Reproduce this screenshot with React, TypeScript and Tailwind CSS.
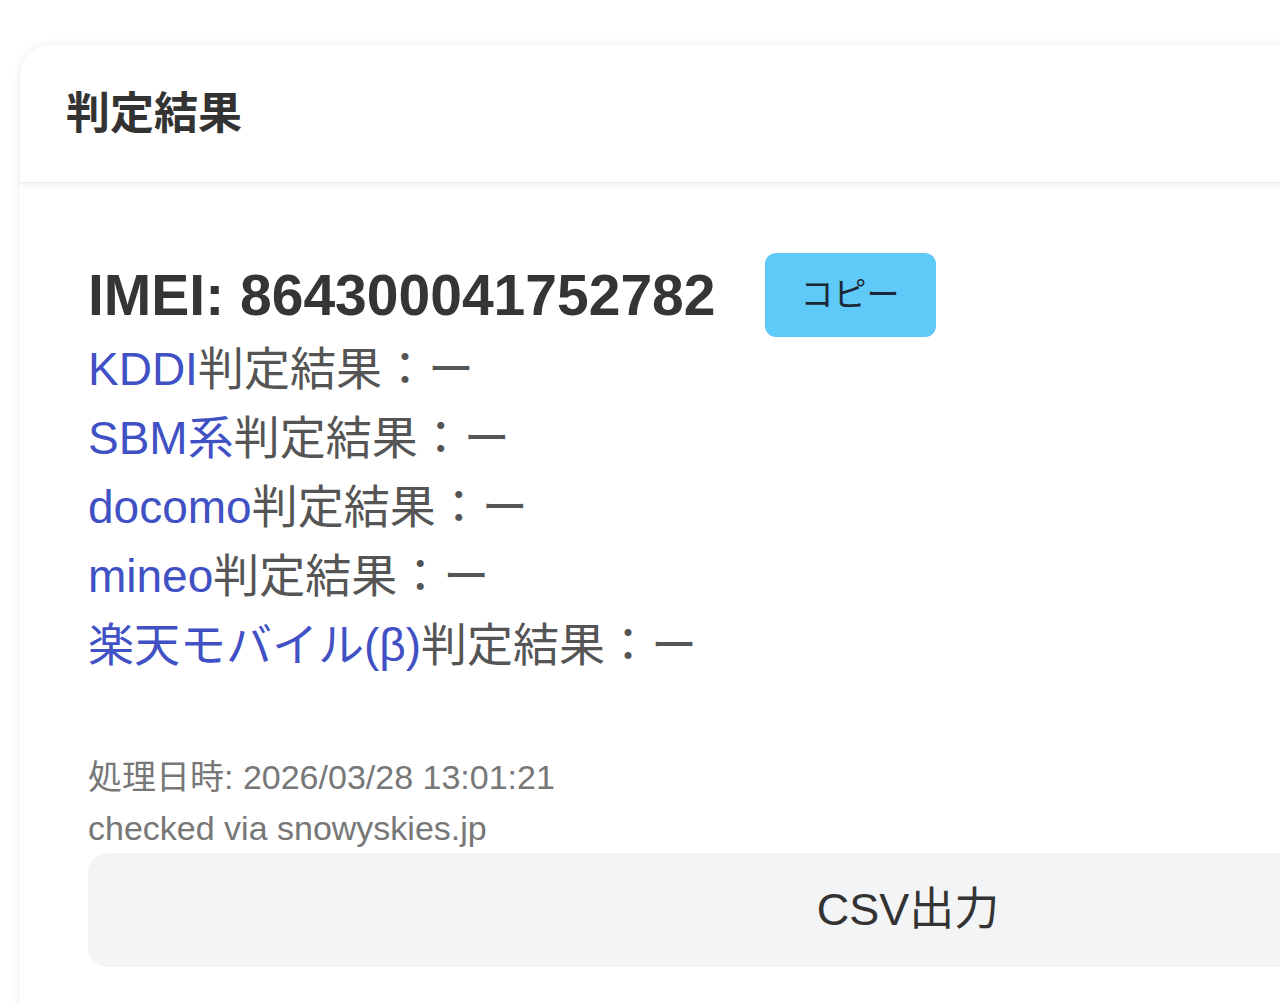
import React from "react";

const font = { fontFamily: '"Liberation Sans", "Noto Sans CJK JP", sans-serif' };

const carriers = ["KDDI", "SBM系", "docomo", "mineo", "楽天モバイル(β)"];

export default function App() {
  return (
    <div className="w-[1280px] h-[1005px] overflow-hidden bg-white" style={font}>
      <div className="ml-[20px] mt-[45px] w-[1760px] h-[1100px] rounded-[30px] bg-white shadow-[0_0_10px_rgba(0,0,0,0.07)]">
        <div className="relative z-10 h-[138px] flex items-center pl-[46px] rounded-t-[30px] bg-white border-b border-[#ececec] shadow-[0_3px_6px_rgba(0,0,0,0.05)]">
          <h2 className="text-[44px] font-bold text-[#333333] leading-none">判定結果</h2>
        </div>
        <div className="pl-[68px] pr-[32px] pt-[70px]">
          <div className="flex items-center gap-[49px]">
            <div className="text-[57px] font-bold text-[#353535] leading-none">IMEI: 864300041752782</div>
            <button className="w-[171px] h-[84px] rounded-[11px] bg-[#5fc9f7] text-[33px] text-[#1c2838] flex items-center justify-center">
              コピー
            </button>
          </div>
          <div className="mt-[-2px] text-[46px] leading-[69px]">
            {carriers.map((c) => (
              <div key={c}>
                <span className="text-[#3f51c4]">{c}</span>
                <span className="text-[#555555]">判定結果：ー</span>
              </div>
            ))}
          </div>
          <div className="mt-[72px] text-[34px] leading-[51px] text-[#777777]">
            <div>処理日時: 2026/03/28 13:01:21</div>
            <div>checked via snowyskies.jp</div>
          </div>
          <button className="mt-[-1px] w-[1640px] h-[114px] rounded-[20px] bg-[#f3f4f6] text-[45px] text-[#333333] flex items-center justify-center">
            CSV出力
          </button>
        </div>
      </div>
    </div>
  );
}
